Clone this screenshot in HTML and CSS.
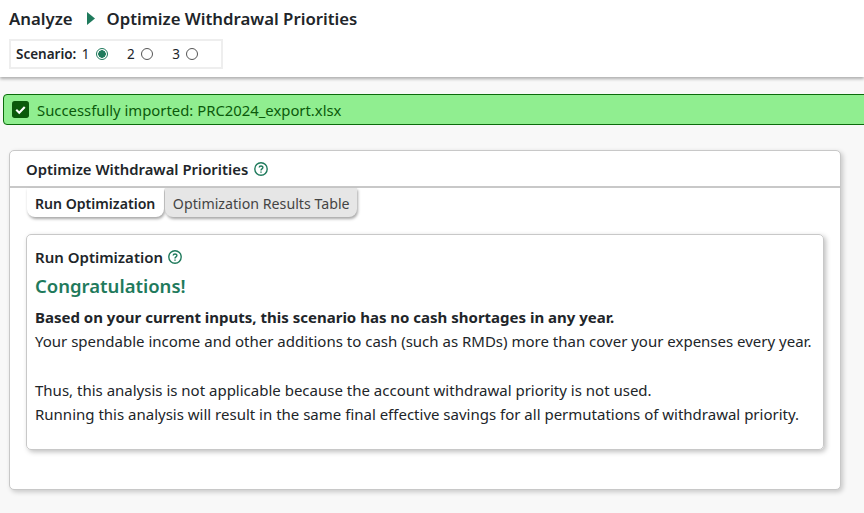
FILE: index.html
```html
<!DOCTYPE html>
<html lang="en">
	<head>
		<meta charset="UTF-8" />
		<meta name="viewport" content="width=device-width, initial-scale=1.0" />
		<title>Optimize Withdrawal Priorities</title>
		<link rel="stylesheet" href="styles.css">
	</head>
	<body>
		<header class="topbar">
			<div class="crumbs">
				<span>Analyze</span>
				<svg class="crumb-arrow" width="8" height="13" viewBox="0 0 8 13"><path d="M0 0 L8 6.5 L0 13 Z" /></svg>
				<span>Optimize Withdrawal Priorities</span>
			</div>
			<div class="scenario">
				<span class="scenario-label">Scenario:</span>
				<label class="scenario-opt">1 <span class="radio checked"></span></label>
				<label class="scenario-opt">2 <span class="radio"></span></label>
				<label class="scenario-opt">3 <span class="radio"></span></label>
			</div>
		</header>

		<div class="alert">
			<svg class="alert-icon" width="17" height="17" viewBox="0 0 16 16">
				<rect width="16" height="16" rx="2.5" fill="#0b5a0b" />
				<path d="M4 8.3 L6.8 11 L12 5.6" fill="none" stroke="#fff" stroke-width="2" />
			</svg>
			<span>Successfully imported: PRC2024_export.xlsx</span>
		</div>

		<section class="card">
			<div class="card-head">
				<span>Optimize Withdrawal Priorities</span>
				<svg class="help" width="14" height="14" viewBox="0 0 14 14">
					<circle cx="7" cy="7" r="6.2" />
					<path d="M5.2 5.6 C5.2 3.4 8.9 3.4 8.9 5.5 C8.9 6.9 7 6.9 7 8.4" />
					<path d="M7 9.6 V10.8" />
				</svg>
			</div>
			<div class="tabs">
				<div class="tab active">Run Optimization</div>
				<div class="tab">Optimization Results Table</div>
			</div>
			<div class="panel">
				<div class="panel-head">
					<span>Run Optimization</span>
					<svg class="help" width="14" height="14" viewBox="0 0 14 14">
						<circle cx="7" cy="7" r="6.2" />
						<path d="M5.2 5.6 C5.2 3.4 8.9 3.4 8.9 5.5 C8.9 6.9 7 6.9 7 8.4" />
						<path d="M7 9.6 V10.8" />
					</svg>
				</div>
				<h2 class="congrats">Congratulations!</h2>
				<p class="lead">Based on your current inputs, this scenario has no cash shortages in any year.</p>
				<p>Your spendable income and other additions to cash (such as RMDs) more than cover your expenses every year.</p>
				<p class="gap">Thus, this analysis is not applicable because the account withdrawal priority is not used.</p>
				<p>Running this analysis will result in the same final effective savings for all permutations of withdrawal priority.</p>
			</div>
		</section>
	</body>
</html>
```

FILE: styles.css
```css
html {
	background: #f8f8f8;
	color: #212529;
	font-family: "Noto Sans", "Open Sans", sans-serif;
	font-size: 15px;
}
body {
	margin: 0;
	overflow: hidden;
	height: 513px;
}
.topbar {
	background: #fff;
	height: 77px;
	padding: 7px 0 0 9px;
	box-sizing: border-box;
	box-shadow: 0 2px 3px rgba(0, 0, 0, 0.3);
}
.crumbs {
	display: flex;
	align-items: center;
	height: 23px;
	font-size: 16.75px;
	font-weight: 600;
}
.crumb-arrow {
	fill: #1f7a5c;
	margin: 0 12px 0 14px;
}
.scenario {
	display: flex;
	align-items: center;
	width: 214px;
	height: 30px;
	box-sizing: border-box;
	margin-top: 9px;
	padding-left: 5px;
	border: 2px solid #eee;
	font-size: 13.5px;
}
.scenario-label {
	font-weight: 600;
	margin-right: 5.5px;
}
.scenario-opt {
	display: flex;
	align-items: center;
	gap: 6px;
	margin-right: 19.5px;
}
.radio {
	width: 12px;
	height: 12px;
	box-sizing: border-box;
	border: 1px solid #555;
	border-radius: 50%;
	background: #fff;
}
.radio.checked {
	border-color: #1f7a5c;
	background: radial-gradient(circle, #1f7a5c 0 3.5px, #fff 4px);
}
.alert {
	display: flex;
	align-items: center;
	gap: 8px;
	margin: 17px -10px 0 3px;
	height: 31px;
	box-sizing: border-box;
	padding-left: 8px;
	background: #90ee90;
	border: 1px solid #0b6b0b;
	border-radius: 4px;
	color: #0b5a0b;
	font-size: 14.85px;
}
.card {
	margin: 25px 23px 0 9px;
	height: 340px;
	box-sizing: border-box;
	background: #fff;
	border: 1px solid #c8c8c8;
	border-radius: 5px;
	box-shadow: 2px 2px 5px rgba(0, 0, 0, 0.2);
}
.card-head {
	display: flex;
	align-items: center;
	gap: 6px;
	height: 37px;
	box-sizing: border-box;
	padding: 1px 0 0 16px;
	border-bottom: 2px solid #c8c8c8;
	font-size: 14.85px;
	font-weight: 600;
}
.help {
	fill: none;
	stroke: #1f7a5c;
	stroke-width: 1.4;
}
.tabs {
	display: flex;
	gap: 1px;
	padding-left: 17px;
}
.tab {
	display: flex;
	align-items: center;
	height: 29px;
	box-sizing: border-box;
	padding: 1px 7.5px 0;
	border-radius: 0 0 8px 8px;
	background: #e6e6e6;
	box-shadow: 1px 2px 3px rgba(0, 0, 0, 0.35);
	color: #444;
	font-size: 14.2px;
}
.tab.active {
	padding: 1px 9px 0 8px;
	background: #fff;
	color: #212529;
	font-size: 14.1px;
	font-weight: 600;
}
.panel {
	margin: 17px 16px 0;
	height: 216px;
	box-sizing: border-box;
	padding: 12px 8px 0;
	border: 1px solid #c8c8c8;
	border-radius: 5px;
	box-shadow: 2px 2px 5px rgba(0, 0, 0, 0.25);
}
.panel-head {
	display: flex;
	align-items: center;
	gap: 5px;
	font-weight: 600;
}
.congrats {
	margin: 6px 0 6px;
	color: #1f7a5c;
	font-size: 18.5px;
	font-weight: 600;
	line-height: 26px;
}
p {
	margin: 0;
	line-height: 24.2px;
}
.lead {
	font-weight: 700;
}
.gap {
	margin-top: 24.2px;
}
```
